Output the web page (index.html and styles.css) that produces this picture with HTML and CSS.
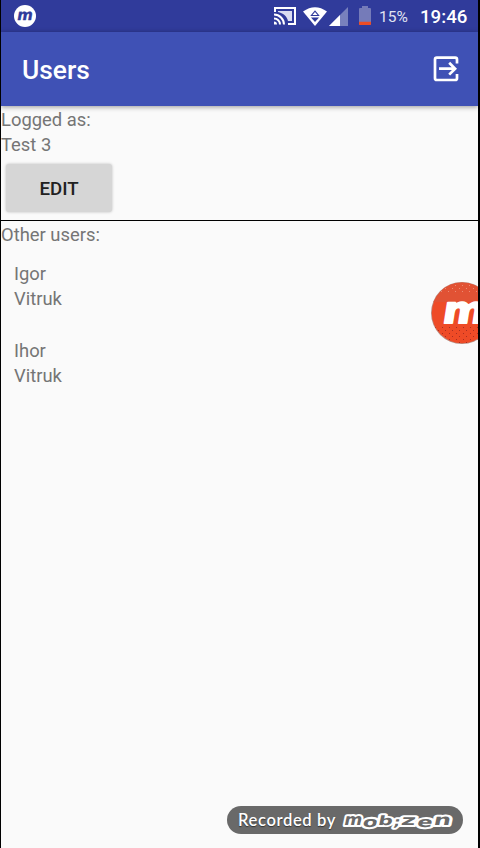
FILE: index.html
```html
<!DOCTYPE html>
<html lang="en">
<head>
<meta charset="utf-8">
<title>Users</title>
<link rel="stylesheet" href="styles.css">
</head>
<body>
<div class="screen">
  <header class="status">
    <svg class="status-logo" width="24" height="24" viewBox="0 0 24 24"><circle cx="12" cy="12" r="11" fill="#fff"/><text class="mark" transform="translate(3.6 16.2) skewX(-10)" font-size="15" fill="#303b9b" stroke="#303b9b" stroke-width=".3">m</text></svg>
    <svg class="cast" width="22" height="18" viewBox="0 0 22 18"><path d="M1 5V1h20v16h-7" fill="none" stroke="#fff" stroke-width="2"/><path d="M4 4h14v10h-4C13 9 9 6 4 5z" fill="#d9dcf0"/><g fill="none" stroke="#fff" stroke-width="2"><path d="M0 7.5A10 10 0 0 1 10 17.5M0 11.5a6 6 0 0 1 6 6"/></g><path d="M0 14.5a3 3 0 0 1 3 3H0z" fill="#fff"/></svg>
    <svg class="wifi" width="24" height="19" viewBox="0 0 24 19"><path d="M0 4.5Q12-4 24 4.5L12 19z" fill="#fff"/><path d="M12 4.2l3.6 4.3H8.4z" fill="#fff" stroke="#303b9b" stroke-width="1.1"/><path d="M8 10.5h8l-4 4.5z" fill="#303b9b"/></svg>
    <svg class="signal" width="19" height="19" viewBox="0 0 19 19"><path d="M0 19L19 0v19z" fill="#7880bd"/><path d="M0 19L11 8v11z" fill="#fff"/></svg>
    <svg class="battery" width="12" height="20" viewBox="0 0 12 20"><path d="M3 0h6v2h2q1 0 1 1v15q0 1-1 1H1q-1 0-1-1V3q0-1 1-1h2z" fill="#757bb9"/><path d="M0 15.7h12V18q0 1-1 1H1q-1 0-1-1z" fill="#ed4c26"/></svg>
    <span class="percent">15%</span>
    <span class="clock">19:46</span>
  </header>
  <div class="toolbar">
    <h1>Users</h1>
    <svg width="26" height="26" viewBox="0 0 26 26" fill="none" stroke="#fff" stroke-width="2.7"><path d="M24 7.5V3.5q0-1.8-1.8-1.8H3.8Q2 1.7 2 3.5v18.7Q2 24 3.8 24h18.4q1.8 0 1.8-1.8V18M6 12.7h16M16.2 6.8l5.9 5.9-5.9 5.9"/></svg>
  </div>
  <main>
    <section class="current">
      <p>Logged as:</p>
      <p>Test 3</p>
      <button class="edit">EDIT</button>
    </section>
    <section class="others">
      <p>Other users:</p>
      <ul>
        <li><p>Igor</p><p>Vitruk</p></li>
        <li><p>Ihor</p><p>Vitruk</p></li>
      </ul>
    </section>
  </main>
  <svg class="bubble" width="48" height="64" viewBox="0 0 48 64">
    <defs>
      <pattern id="light" width="7" height="6" patternUnits="userSpaceOnUse"><path d="M1 1h1v1H1zM4 4h1v1H4z" fill="#ec8a72"/></pattern>
      <pattern id="dark" width="7" height="6" patternUnits="userSpaceOnUse"><path d="M1 1h1v1H1zM5 4h1v1H5z" fill="#a92e20"/></pattern>
      <clipPath id="disc"><circle cx="32" cy="32" r="30.5"/></clipPath>
    </defs>
    <circle cx="32" cy="32" r="31" fill="#b98b80"/><circle cx="32" cy="32" r="30.2" fill="#ee4b27"/>
    <g clip-path="url(#disc)"><path d="M0 0h48v21H0z" fill="#e15234"/><path d="M0 3h48v10H0z" fill="url(#light)"/><path d="M0 44h48v19H0z" fill="url(#dark)"/></g>
    <text class="mark" transform="translate(11.5 42.2) skewX(-9) scale(1.1 1)" font-size="37" fill="#fff" stroke="#fff" stroke-width="2">m</text>
  </svg>
  <div class="recorded">
    <span>Recorded by</span>
    <svg width="116" height="28" viewBox="0 0 116 28">
      <g class="wordmark">
        <text transform="translate(3.5 18.5) skewX(-12) scale(1.07 1)" font-size="16">m</text>
        <text transform="translate(22 20.5) skewX(-12) scale(1.5 1)" font-size="14.5">o</text>
        <text transform="translate(37.5 18.5) skewX(-12) scale(1.5 .95)" font-size="13.5">b</text>
        <text transform="translate(53 19.5) skewX(-12) scale(1.3 .95)" font-size="13">;</text>
        <text transform="translate(60.5 18.5) skewX(-12) scale(1.75 1)" font-size="14">z</text>
        <text transform="translate(76.5 20.5) skewX(-12) scale(1.55 1)" font-size="14.5">e</text>
        <text transform="translate(93 18.5) skewX(-12) scale(1.6 1)" font-size="15">n</text>
      </g>
    </svg>
  </div>
</div>
</body>
</html>
```
FILE: styles.css
```css
* { box-sizing: border-box; }
body { margin: 0; background: #000; font-family: Roboto, "Liberation Sans", sans-serif; }
h1, p, ul { margin: 0; padding: 0; font-weight: 400; }
.screen { position: relative; height: 848px; margin: 0 2px 0 1px; background: #fafafa; overflow: hidden; }
.status { display: flex; align-items: center; height: 32px; padding: 0 11px 0 12px; background: #303b9b; color: #fff; }
.status-logo { margin-right: auto; }
.cast { margin-right: 7px; }
.wifi { margin-right: 2px; }
.signal { margin-right: 11px; }
.battery { margin-right: 8px; }
.percent { width: 41px; color: #e1e3f2; font-size: 15.5px; line-height: 32px; padding-top: 2px; }
.clock { width: 47px; font-size: 18.7px; font-weight: 500; line-height: 32px; padding-top: 2px; white-space: nowrap; }
.toolbar { position: relative; display: flex; align-items: center; justify-content: space-between; height: 74px; padding: 0 19px 0 21px; background: #3f51b5; box-shadow: 0 1px 5px rgba(0,0,0,.4); color: #fff; }
h1 { font-size: 26.4px; font-weight: 500; line-height: 32px; padding-top: 1px; }
main { color: #757575; font-size: 18.4px; line-height: 25px; }
.current { height: 115px; padding-top: 1px; border-bottom: 1px solid #000; }
.edit { display: block; width: 106px; height: 48px; margin: 7px 0 0 5px; padding: 2px 0 0; border: 0; border-radius: 3px; background: #d6d6d6; box-shadow: 0 0 3px rgba(0,0,0,.25); color: #212121; font: 500 18.7px Roboto, sans-serif; }
.others { padding-top: 1px; }
ul { list-style: none; padding: 14px 13px; display: grid; gap: 27px; }
.bubble { position: absolute; left: 429px; top: 281px; }
.mark { font-family: "DejaVu Sans", sans-serif; font-weight: 700; stroke-linejoin: round; }
.recorded { position: absolute; left: 226px; top: 806px; display: flex; align-items: center; width: 236px; height: 28px; padding-left: 11px; border-radius: 14px; background: #696969; color: #fff; }
.recorded span { width: 102px; padding-bottom: 1px; white-space: nowrap; font: 600 16.6px/26px Lato, sans-serif; letter-spacing: .6px; text-shadow: 0 1px 1px #333; }
.wordmark { font-family: "DejaVu Sans", sans-serif; font-weight: 700; fill: #696969; stroke: #fff; stroke-width: 4px; stroke-linejoin: round; paint-order: stroke; }
```
